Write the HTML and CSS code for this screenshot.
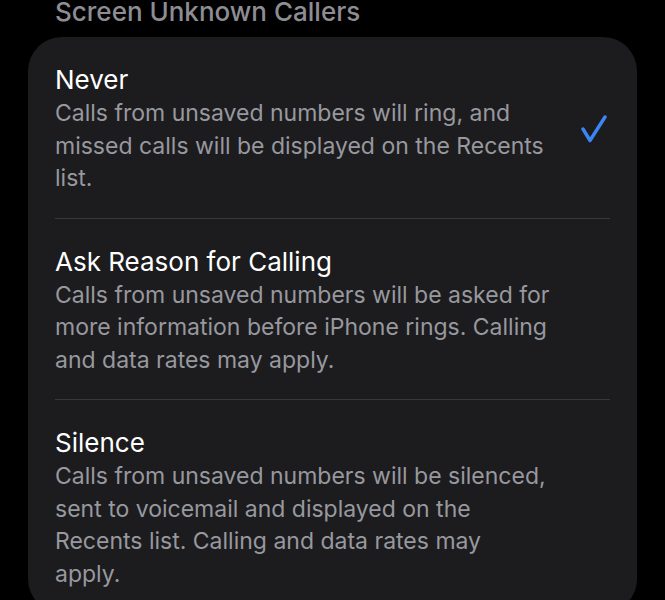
FILE: index.html
```html
<!DOCTYPE html>
<html lang="en">
<head>
  <meta charset="UTF-8">
  <meta name="viewport" content="width=device-width, initial-scale=1.0">
  <title>Screen Unknown Callers</title>
  <link rel="stylesheet" href="styles.css">
</head>
<body>

<h2 class="section-title">Screen Unknown Callers</h2>

<div class="card">
  <div class="option">
    <div class="option-text">
      <div class="option-name">Never</div>
      <div class="option-desc">Calls from unsaved numbers will ring, and<br>missed calls will be displayed on the Recents<br>list.</div>
    </div>
    <svg class="check" width="28" height="30" viewBox="0 0 28 30">
      <polyline points="3,14 10,25.5 25,2" fill="none" stroke="#3a86f6" stroke-width="3.4" stroke-linecap="round" stroke-linejoin="round" />
    </svg>
  </div>

  <div class="option">
    <div class="option-text">
      <div class="option-name">Ask Reason for Calling</div>
      <div class="option-desc">Calls from unsaved numbers will be asked for<br>more information before iPhone rings. Calling<br>and data rates may apply.</div>
    </div>
  </div>

  <div class="option">
    <div class="option-text">
      <div class="option-name">Silence</div>
      <div class="option-desc">Calls from unsaved numbers will be silenced,<br>sent to voicemail and displayed on the<br>Recents list. Calling and data rates may<br>apply.</div>
    </div>
  </div>
</div>

</body>
</html>
```

FILE: styles.css
```css
body {
  margin: 0;
  background-color: #000;
  font-family: Inter, "Noto Sans", sans-serif;
  overflow: hidden;
}
.section-title {
  margin: 0 0 13px;
  padding-left: 55px;
  font-size: 26px;
  font-weight: 500;
  line-height: 24px;
  color: #8d8d93;
}
.card {
  background-color: #1c1c1e;
  border-radius: 34px;
  margin: 0 28px;
}
.option {
  display: flex;
  align-items: center;
  margin: 0 27px;
  padding: 26px 0 23px;
  border-bottom: 1px solid #38383a;
}
.option:last-child {
  border-bottom: none;
}
.option-text {
  flex: 1;
}
.option-name {
  color: #fff;
  font-size: 26px;
  line-height: 33px;
}
.option-desc {
  margin-top: 1px;
  color: #98989f;
  font-size: 23px;
  line-height: 32.5px;
}
.check {
  margin-right: 2px;
  margin-top: 2px;
}
```
